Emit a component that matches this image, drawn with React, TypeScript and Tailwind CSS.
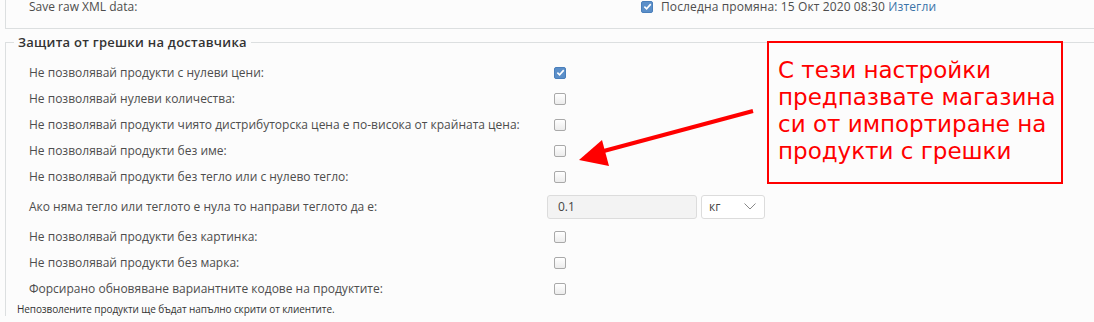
import React from 'react';

const rows: { label: string; checked?: boolean }[] = [
  { label: 'Не позволявай продукти с нулеви цени:', checked: true },
  { label: 'Не позволявай нулеви количества:' },
  { label: 'Не позволявай продукти чиято дистрибуторска цена е по-висока от крайната цена:' },
  { label: 'Не позволявай продукти без име:' },
  { label: 'Не позволявай продукти без тегло или с нулево тегло:' },
];

const rows2: { label: string; checked?: boolean }[] = [
  { label: 'Не позволявай продукти без картинка:' },
  { label: 'Не позволявай продукти без марка:' },
  { label: 'Форсирано обновяване вариантните кодове на продуктите:' },
];

const Check = ({ checked }: { checked?: boolean }) =>
  checked ? (
    <span className="w-[12px] h-[12px] rounded-[2px] bg-[#5b8fc9] border border-[#4a7fbb] flex items-center justify-center">
      <svg width="9" height="9" viewBox="0 0 10 10">
        <path d="M1.5 5.2 L4 7.6 L8.6 2.4" stroke="#fff" strokeWidth="1.8" fill="none" />
      </svg>
    </span>
  ) : (
    <span className="w-[12px] h-[12px] rounded-[2px] border border-[#a9a9a9] bg-gradient-to-b from-white to-[#ececec]" />
  );

const Row = ({ label, checked }: { label: string; checked?: boolean }) => (
  <div className="flex items-center h-[26px]">
    <div className="w-[541px] pl-[23px]">{label}</div>
    <div className="pl-[7px] flex items-center">
      <Check checked={checked} />
    </div>
  </div>
);

export default function App() {
  return (
    <div
      className="relative w-[1094px] h-[322px] overflow-hidden bg-[#fcfcfc] text-[12px] text-[#4d4d4d]"
      style={{ fontFamily: '"Open Sans", "Noto Sans", sans-serif' }}
    >
      <div className="ml-[5px] h-[29px] border-l border-b border-[#dcdfe0] flex items-start">
        <div className="w-[635px] pl-[23px] leading-[13px]">Save raw XML data:</div>
        <div className="flex items-center gap-[8px] leading-[13px]">
          <Check checked />
          <span className="tracking-[0.01em]">
            Последна промяна: 15 Окт 2020 08:30 <span className="text-[#3a73a8]">Изтегли</span>
          </span>
        </div>
      </div>

      <fieldset className="ml-[5px] mt-[4px] border-t border-l border-[#dcdfe0] pt-[1px]">
        <legend className="ml-[8px] px-[4px] text-[13px] font-semibold tracking-[0.02em] text-[#333]">
          Защита от грешки на доставчика
        </legend>
        <div className="pt-[6px]">
          {rows.map((r) => (
            <Row key={r.label} {...r} />
          ))}
          <div className="flex items-center h-[34px]">
            <div className="w-[541px] pl-[23px]">Ако няма тегло или теглото е нула то направи теглото да е:</div>
            <div className="flex gap-[4px]">
              <div className="w-[150px] h-[24px] rounded-[3px] border border-[#dcdcdc] bg-[#f3f3f3] pl-[10px] flex items-center text-[#444]">
                0.1
              </div>
              <div className="w-[64px] h-[24px] rounded-[3px] border border-[#dcdcdc] bg-white pl-[7px] pr-[8px] flex items-center justify-between text-[#444]">
                <span>кг</span>
                <svg width="12" height="7" viewBox="0 0 12 7">
                  <path d="M0.5 0.5 L6 6 L11.5 0.5" stroke="#888" strokeWidth="1" fill="none" />
                </svg>
              </div>
            </div>
          </div>
          {rows2.map((r) => (
            <Row key={r.label} {...r} />
          ))}
          <div className="pl-[11px] text-[10px] leading-[14px] text-[#333] tracking-[-0.01em]">
            Непозволените продукти ще бъдат напълно скрити от клиентите.
          </div>
        </div>
      </fieldset>

      <div
        className="absolute left-[767px] top-[41px] w-[296px] h-[143px] border-2 border-[#ff0000] bg-[#fcfcfc] pl-[9px] pt-[14px] text-[23px] leading-[27px] text-[#ff0000]"
        style={{ fontFamily: '"DejaVu Sans", sans-serif' }}
      >
        С тези настройки
        <br />
        предпазвате магазина
        <br />
        си от импортиране на
        <br />
        продукти с грешки
      </div>

      <svg className="absolute left-0 top-0 pointer-events-none" width="1094" height="322">
        <line x1="753" y1="111" x2="600" y2="152" stroke="#ff0000" strokeWidth="4" />
        <polygon points="579,160 602,140 609,166" fill="#ff0000" />
      </svg>
    </div>
  );
}
